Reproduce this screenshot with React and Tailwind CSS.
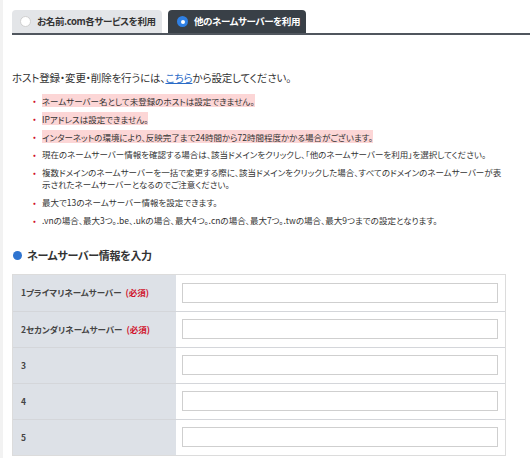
import React from "react";

const notes = [
  { text: "ネームサーバー名として未登録のホストは設定できません。", warn: true },
  { text: "IPアドレスは設定できません。", warn: true },
  { text: "インターネットの環境により、反映完了まで24時間から72時間程度かかる場合がございます。", warn: true },
  { text: "現在のネームサーバー情報を確認する場合は、該当ドメインをクリックし、「他のネームサーバーを利用」を選択してください。" },
  {
    text: "複数ドメインのネームサーバーを一括で変更する際に、該当ドメインをクリックした場合、すべてのドメインのネームサーバーが表示されたネームサーバーとなるのでご注意ください。",
  },
  { text: "最大で13のネームサーバー情報を設定できます。" },
  { text: ".vnの場合、最大3つ。.be、.ukの場合、最大4つ。.cnの場合、最大7つ。.twの場合、最大9つまでの設定となります。" },
];

const rows = [
  { label: "1プライマリネームサーバー", required: true },
  { label: "2セカンダリネームサーバー", required: true },
  { label: "3" },
  { label: "4" },
  { label: "5" },
];

export default function App() {
  return (
    <div className="w-[530px] h-[458px] overflow-hidden bg-white text-[#333] font-['Noto_Sans_CJK_JP','Noto_Sans',sans-serif] [font-feature-settings:'palt'] border-l-[3px] border-[#f2f2f2]">
      {/* タブ */}
      <div className="ml-[9px] mt-[10px] flex items-end gap-[6px] border-b-2 border-[#50565e]">
        <div className="flex h-[23px] w-[150px] items-center gap-[6px] whitespace-nowrap rounded-t-[4px] bg-[#e3e5e8] pl-[8px] text-[9.5px] font-bold tracking-[-0.4px]">
          <span className="h-[11px] w-[11px] shrink-0 rounded-full border border-[#d0d0d0] bg-white" />
          お名前.com各サービスを利用
        </div>
        <div className="flex h-[23px] w-[138px] items-center gap-[6px] whitespace-nowrap rounded-t-[4px] bg-[#394047] pl-[9px] text-[9.5px] font-bold tracking-[-0.4px] text-white">
          <span className="grid h-[11px] w-[11px] shrink-0 place-items-center rounded-full bg-[#2f80e4]">
            <span className="h-[4px] w-[4px] rounded-full bg-white" />
          </span>
          他のネームサーバーを利用
        </div>
      </div>

      <p className="ml-[9px] mt-[35px] whitespace-nowrap text-[10.5px] leading-[16px] tracking-[-0.15px]">
        ホスト登録・変更・削除を行うには、
        <span className="text-[#2a6bc7] underline">こちら</span>
        から設定してください。
      </p>

      <ul className="ml-[30px] mt-[8px] mr-[24px] flex flex-col gap-[6px]">
        {notes.map((n, i) => (
          <li key={i} className="flex text-[8.5px] leading-[12px]">
            <span className="w-[9px] shrink-0 text-[#d0112b]">•</span>
            <span>
              <span className={n.warn ? "bg-[#fcd6d6] py-[0.5px]" : ""}>{n.text}</span>
            </span>
          </li>
        ))}
      </ul>

      <h2 className="ml-[10px] mt-[21px] flex items-center gap-[5px] text-[11px] font-bold tracking-[-0.3px]">
        <span className="h-[9px] w-[9px] rounded-full bg-[#2f74d0]" />
        ネームサーバー情報を入力
      </h2>

      <div className="ml-[9px] mt-[10px] w-[494px] border border-[#dcdcdc]">
        {rows.map((r, i) => (
          <div key={i} className={`flex h-[36px] ${i > 0 ? "border-t border-[#d4d6da]" : ""}`}>
            <div className="flex w-[163px] items-center bg-[#dde1e7] pl-[8px] text-[8.5px] font-bold text-[#444]">
              {r.label}
              {r.required && <span className="ml-[4px] text-[#d0112b]">(必須)</span>}
            </div>
            <div className="flex flex-1 items-center pl-[6px] pr-[7px]">
              <input className="h-[20px] w-full border border-[#cfcfcf] bg-white outline-none" />
            </div>
          </div>
        ))}
      </div>
    </div>
  );
}
